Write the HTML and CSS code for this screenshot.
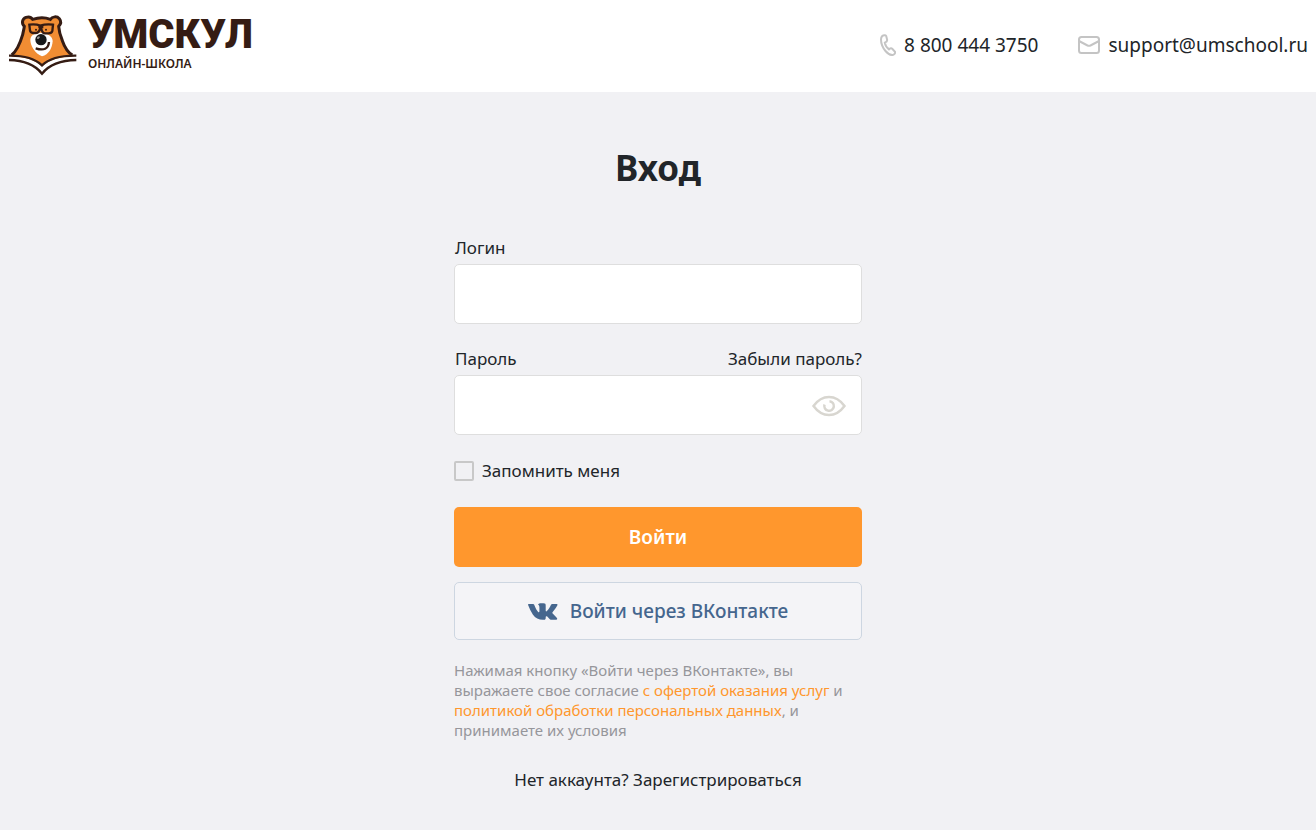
FILE: index.html
```html
<!DOCTYPE html>
<html lang="ru">
<head>
    <meta charset="UTF-8">
    <meta name="viewport" content="width=device-width, initial-scale=1.0">
    <title>Умскул — Вход</title>
    <link rel="stylesheet" href="styles.css">
</head>
<body>
    <header class="header">
        <a class="logo" href="#">
            <svg class="logo-bear" viewBox="24 24 210 186" aria-hidden="true">
                <path d="M31 155 C52 138 60 113 68 86 C70 75 72 69 73 61 C64 53 66 38 78 34 C87 31 94 34 98 40 C116 34 136 34 151 40 C157 31 171 30 178 38 C184 46 182 55 176 61 C177 75 181 89 187 104 C195 127 202 142 220 153 Q155 155 126 183 Q95 155 31 155Z" fill="#f18d33"/>
                <path d="M35 147 C52 134 60 113 68 86 C70 75 72 69 73 61 C64 53 66 38 78 34 C87 31 94 34 98 40 C116 34 136 34 151 40 C157 31 171 30 178 38 C184 46 182 55 176 61 C177 75 181 89 187 104 C195 127 202 138 217 147" fill="none" stroke="#351c14" stroke-width="9"/>
                <path d="M126 151 C105 143 91 119 91 102 C91 86 106 80 121 80 C142 80 158 91 158 105 C157 126 146 146 126 151Z" fill="#fff"/>
                <path d="M27 157 Q95 156 126 189 Q157 156 229 157" fill="none" stroke="#fff" stroke-width="11"/>
                <path d="M27 149 Q95 148 126 178 Q157 148 229 149M27 162 Q94 163 126 203 Q158 163 229 162" fill="none" stroke="#351c14" stroke-width="7"/>
                <path d="M88 56 Q106 53 121 59 Q138 53 159 56 L157 75 Q155 82 145 82 H135 Q127 82 124 68 H120 Q117 81 106 81 H100 Q91 80 90 73Z" fill="#f18d33" stroke="#351c14" stroke-width="7"/>
                <path d="M115 62 H130" stroke="#351c14" stroke-width="9"/>
                <circle cx="108" cy="71" r="3" fill="#351c14"/>
                <circle cx="138" cy="71" r="3" fill="#351c14"/>
                <ellipse cx="123" cy="101" rx="17" ry="17" fill="#17191b"/>
                <ellipse cx="115" cy="95" rx="5" ry="3" fill="#9a9a9a" transform="rotate(-35 115 95)"/>
                <path d="M107 127 Q144 139 147 108" fill="none" stroke="#351c14" stroke-width="7"/>
            </svg>
            <span class="logo-text">
                <span class="logo-name">УМСКУЛ</span>
                <span class="logo-sub">ОНЛАЙН-ШКОЛА</span>
            </span>
        </a>
        <div class="contacts">
            <a class="contact" href="tel:88004443750">
                <svg class="phone-icon" viewBox="0 0 16 22" aria-hidden="true">
                    <path d="M5 1.2C3 .8 1 2.5 1 5.5c0 4 1.8 8.300 4.500 11.500 2.300 2.800 5 4.200 7.200 4 1.800-.4 2.800-2 2.300-3.300l-2.800-3c-1-.9-2-.5-3.200.7-2.200-1.700-3.800-4-4.200-6.800 1.900-.7 2.600-1.500 2.300-3L6.200 2C6 1.500 5.500 1.300 5 1.200Z"/>
                </svg>
                8 800 444 3750
            </a>
            <a class="contact" href="mailto:support@umschool.ru">
                <svg class="mail-icon" viewBox="0 0 22 18" aria-hidden="true">
                    <rect x="1" y="1" width="20" height="16" rx="2.500"/>
                    <path d="M1 5l8.500 4.500q1.500.7 3 0l8.500-4.500"/>
                </svg>
                support@umschool.ru
            </a>
        </div>
    </header>

    <main class="login">
        <h1>Вход</h1>
        <form class="login-form">
            <div class="label-row">
                <label for="login">Логин</label>
            </div>
            <input class="field" type="text" id="login" name="login">

            <div class="label-row">
                <label for="password">Пароль</label>
                <a href="#">Забыли пароль?</a>
            </div>
            <div class="password">
                <input class="field" type="password" id="password" name="password">
                <button class="eye" type="button" aria-label="Показать пароль">
                    <svg viewBox="0 0 34 22" aria-hidden="true">
                        <path d="M1.500 11Q8 2 17 2T32.500 11Q26 20 17 20T1.500 11Z"/>
                        <path d="M17.500 6.200A4.800 4.800 0 1 1 12.500 9.500"/>
                    </svg>
                </button>
            </div>

            <label class="remember">
                <input type="checkbox" name="remember">
                Запомнить меня
            </label>

            <button class="btn btn-login" type="submit">Войти</button>
            <button class="btn btn-vk" type="button">
                <svg viewBox="0 0 30 17" aria-hidden="true">
                    <path d="M.6 1h4.500q.8 0 1.100.8C7.400 5 9 8 10.200 9c.8.6 1.200.2 1.200-1V4.200C11.300 2.600 10.900 2 10 1.500 10.600.6 11.600.3 13.500.3h2c1.900.1 2.200.7 2.200 2.300v4.900c0 1 .6 1.200 1.200.6C20.500 6.500 22 4 23 1.800q.4-.8 1.300-.8h4.400c.8 0 1 .5.700 1.200-.9 2.100-2.800 4.500-4.700 6.700-.5.600-.5 1 0 1.600l3.800 3.900c1.200 1.400.9 2.400-.9 2.400h-3.800c-1.300 0-2-.5-3.400-2.100-1.700-1.800-2.700-1.800-2.700 0 0 1.500-.4 2.100-1.600 2.100-4.700.4-8.400-1.400-11.300-5.400Q2 7.200.1 2 -.1 1.200.6 1Z"/>
                </svg>
                Войти через ВКонтакте
            </button>
        </form>
        <p class="terms">
            Нажимая кнопку «Войти через ВКонтакте», вы выражаете свое согласие
            <a href="#">с офертой оказания услуг</a> и
            <a href="#">политикой обработки персональных данных</a>, и принимаете их условия
        </p>
        <p class="signup">Нет аккаунта? <a href="#">Зарегистрироваться</a></p>
    </main>
</body>
</html>
```

FILE: styles.css
```css
* {
    box-sizing: border-box;
}
body {
    margin: 0;
    background-color: #f1f1f4;
    color: #212529;
    font-family: "Noto Sans", sans-serif;
    font-size: 17px;
    line-height: 24px;
}
a {
    color: inherit;
    text-decoration: none;
}
button,
input {
    font-family: inherit;
}

/* Header */
.header {
    display: flex;
    justify-content: space-between;
    align-items: center;
    padding: 13px 8px 15px;
    background-color: #fff;
}
.logo {
    display: flex;
    gap: 10px;
    color: #351c14;
}
.logo-bear {
    width: 70px;
    height: 64px;
}
.logo-text {
    display: flex;
    flex-direction: column;
}
.logo-name {
    font-family: Roboto, sans-serif;
    font-size: 40px;
    font-weight: 900;
    line-height: 44px;
}
.logo-sub {
    font-size: 12px;
    font-weight: 600;
    line-height: 14px;
}
.contacts {
    display: flex;
    flex-wrap: wrap;
    gap: 8px 40px;
}
.contact {
    display: flex;
    align-items: center;
    gap: 8px;
    font-size: 19px;
}
.contact svg {
    fill: none;
    stroke: #c4c4c4;
    stroke-width: 2;
}
.phone-icon {
    width: 16px;
    height: 22px;
}
.mail-icon {
    width: 22px;
    height: 18px;
}

/* Login form */
.login {
    max-width: 408px;
    margin: 0 auto;
    padding: 56px 0 32px;
}
h1 {
    margin: 0 0 48px;
    font-size: 35px;
    line-height: 40px;
    text-align: center;
}
.login-form {
    display: flex;
    flex-direction: column;
}
.label-row {
    display: flex;
    justify-content: space-between;
    margin-bottom: 4px;
    padding-left: 1px;
}
.field {
    width: 100%;
    height: 60px;
    margin-bottom: 23px;
    padding: 0 16px;
    border: 1px solid #dedede;
    border-radius: 5px;
    background-color: #fff;
    font-size: 17px;
}
.password {
    position: relative;
}
.password .field {
    margin-bottom: 24px;
    padding-right: 56px;
}
.eye {
    position: absolute;
    top: 20px;
    right: 16px;
    width: 34px;
    height: 22px;
    padding: 0;
    border: 0;
    background: none;
    cursor: pointer;
}
.eye svg {
    display: block;
    fill: none;
    stroke: #d8d6d0;
    stroke-width: 2.5;
}
.remember {
    display: flex;
    align-items: center;
    gap: 8px;
    margin-bottom: 24px;
}
.remember input {
    appearance: none;
    width: 20px;
    height: 20px;
    margin: 0;
    border: 2px solid #c8c8c8;
    border-radius: 2px;
}
.remember input:checked {
    background-color: #ff972d;
}
.btn {
    display: flex;
    justify-content: center;
    align-items: center;
    border-radius: 5px;
    font-size: 19px;
    cursor: pointer;
}
.btn-login {
    height: 60px;
    margin-bottom: 15px;
    border: 0;
    background-color: #ff972d;
    color: #fff;
    font-weight: 600;
}
.btn-vk {
    gap: 12px;
    height: 58px;
    border: 1px solid #cdd6e1;
    background-color: #f4f4f7;
    color: #45668e;
    font-weight: 500;
}
.btn-vk svg {
    width: 30px;
    height: 17px;
    fill: #45668e;
}
.terms {
    margin: 20px 0 28px;
    color: #96969b;
    font-size: 15px;
    line-height: 20px;
}
.terms a {
    color: #ff972d;
}
.signup {
    margin: 0;
    text-align: center;
}
```
